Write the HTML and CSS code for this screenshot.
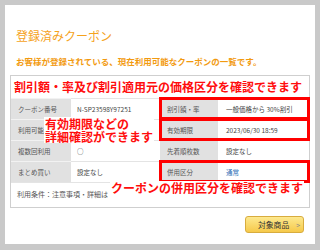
FILE: index.html
```html
<!DOCTYPE html>
<html lang="ja">
<head>
    <meta charset="UTF-8">
    <meta name="viewport" content="width=device-width, initial-scale=1.0">
    <title>登録済みクーポン</title>
    <link rel="stylesheet" href="styles.css">
</head>
<body>
    <div class="panel">
        <h1>登録済みクーポン</h1>
        <p class="lead">お客様が登録されている、現在利用可能なクーポンの一覧です。</p>

        <div class="coupon-box">
            <div class="note note-top">割引額・率及び割引適用元の価格区分を確認できます</div>

            <div class="tables">
                <div class="coupon-table">
                    <div class="row">
                        <div class="label">クーポン番号</div>
                        <div class="value">N-SP23598Y97251</div>
                    </div>
                    <div class="row">
                        <div class="label">利用可能</div>
                        <div class="value"></div>
                    </div>
                    <div class="row">
                        <div class="label">複数回利用</div>
                        <div class="value">○</div>
                    </div>
                    <div class="row">
                        <div class="label">まとめ買い</div>
                        <div class="value">設定なし</div>
                    </div>
                </div>
                <div class="coupon-table right">
                    <div class="row marked">
                        <div class="label">割引額・率</div>
                        <div class="value">一般価格から 30%割引</div>
                    </div>
                    <div class="row marked">
                        <div class="label">有効期限</div>
                        <div class="value">2023/06/30 18:59</div>
                    </div>
                    <div class="row">
                        <div class="label">先着順枚数</div>
                        <div class="value">設定なし</div>
                    </div>
                    <div class="row marked">
                        <div class="label">併用区分</div>
                        <div class="value"><a href="#">通常</a></div>
                    </div>
                </div>
            </div>

            <div class="terms">利用条件：注意事項・詳細は</div>

            <!-- 説明の注釈 -->
            <div class="note note-detail">有効期限などの<br>詳細確認ができます</div>
            <div class="note note-combo">クーポンの併用区分を確認できます</div>
        </div>

        <div class="actions">
            <a class="btn" href="#">対象商品<span class="chev">&gt;</span></a>
        </div>
    </div>
</body>
</html>
```

FILE: styles.css
```css
body {
    margin: 0;
    padding: 5px;
    background-color: #c9c9c9;
    font-family: "Noto Sans CJK JP", "Noto Sans", sans-serif;
}
.panel {
    background-color: #fff;
    height: 239px;
    padding: 24px 5px 0 5px;
    box-sizing: border-box;
}
h1 {
    margin: 0 0 0 6px;
    font-size: 12px;
    line-height: 14px;
    font-weight: normal;
    color: #f5a21c;
}
.lead {
    margin: 13px 0 8px 6px;
    font-size: 8.5px;
    line-height: 11px;
    font-weight: bold;
    color: #f29a10;
}
.coupon-box {
    position: relative;
    border: 1px solid #cfcfcf;
    width: 300px;
    box-sizing: border-box;
}
.tables {
    display: flex;
}
.coupon-table {
    width: 149px;
}
.row {
    display: flex;
    height: 21px;
    font-size: 6.5px;
    color: #444;
}
.label {
    width: 60px;
    background-color: #e1e1e1;
    border-top: 1px solid #f2f2f2;
    padding-left: 7px;
    box-sizing: border-box;
    display: flex;
    align-items: center;
    color: #555;
    white-space: nowrap;
}
.value {
    flex: 1;
    border-top: 1px solid #e4e4e4;
    padding-left: 6px;
    display: flex;
    align-items: center;
}
.right .label {
    width: 58px;
}
.right .value {
    padding-left: 8px;
}
.value a {
    color: #2a6db5;
    text-decoration: none;
}
.row.marked {
    outline: 3px solid #ff0000;
    outline-offset: -2px;
    position: relative;
}
.terms {
    height: 24px;
    border-top: 1px solid #e4e4e4;
    padding-left: 6px;
    font-size: 7px;
    line-height: 23px;
    color: #555;
    white-space: nowrap;
}
.note {
    font-size: 12px;
    font-weight: bold;
    color: #ff0d0d;
    white-space: nowrap;
}
.note-top {
    height: 22px;
    line-height: 22px;
    padding-left: 3px;
}
.note-detail {
    position: absolute;
    left: 33px;
    top: 41px;
    line-height: 13px;
    background-color: #fff;
    padding: 0 1px;
}
.note-combo {
    position: absolute;
    left: 99px;
    top: 105px;
    line-height: 14px;
    background-color: #fff;
    padding: 0 1px;
}
.actions {
    display: flex;
    justify-content: flex-end;
    margin: 8px 6px 0 0;
}
.btn {
    display: flex;
    align-items: center;
    height: 17px;
    width: 59px;
    box-sizing: border-box;
    padding-left: 12px;
    border: 1px solid #d8ac3e;
    border-radius: 3px;
    background: linear-gradient(#fde98f, #f6c94a);
    font-size: 7.8px;
    color: #333;
    text-decoration: none;
}
.chev {
    margin-left: 7px;
    color: #888;
    font-size: 7px;
}
```
